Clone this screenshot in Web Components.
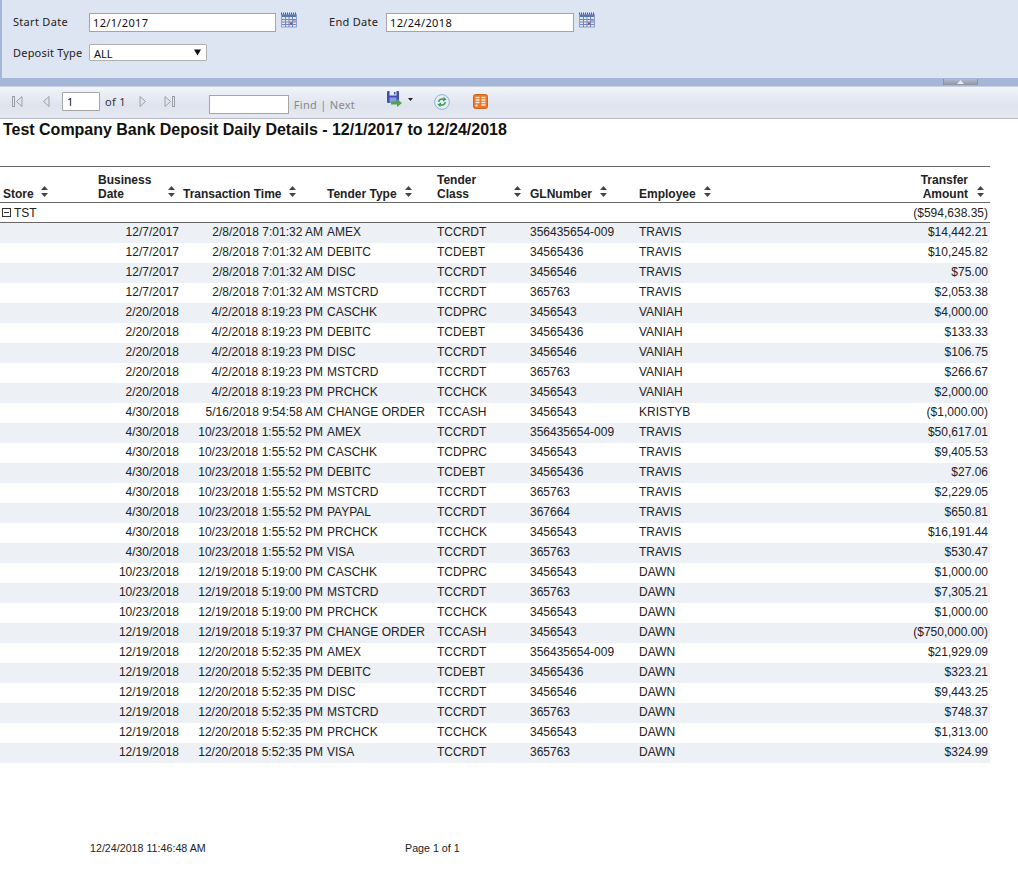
<!DOCTYPE html>
<html><head><meta charset="utf-8"><title>Bank Deposit Daily Details</title>
<style>html,body{margin:0;padding:0;background:#fff;font-family:"Liberation Sans",Arial,sans-serif;overflow:hidden}</style></head>
<body>
<report-viewer></report-viewer>
<script>
const CAL=`<svg width="16" height="16" viewBox="0 0 16 16" style="display:block"><rect x=".5" y="2.500" width="15" height="12.500" fill="#dfe6f5" stroke="#8ba0c8"/><path d="M0 1.500h16" stroke="#555" stroke-dasharray="1 1" stroke-width="2"/><rect x="1" y="3" width="14" height="2" fill="#5a76b0"/><path d="M1 7.500h14M1 10h14M1 12.500h14M4.500 5v10M8 5v10M11.500 5v10" stroke="#6f88bd"/><rect x="9" y="10.500" width="2" height="2" fill="#c23c3c"/><rect x="12" y="8" width="3" height="2" fill="#c9a0b0"/></svg>`;
class FilterField extends HTMLElement{
  constructor(){super();const w=this.getAttribute('width')||'186';
  this.attachShadow({mode:'open'}).innerHTML=`<style>
  :host{display:flex;align-items:flex-start}
  .l{font:11px/14px "Noto Sans",sans-serif;letter-spacing:.3px;color:#222;width:var(--lw,76px);padding-top:2px;white-space:nowrap}
  .v{box-sizing:border-box;width:${w}px;height:19px;border:1px solid #a5a5a5;background:#fff;font:11px/18px "Noto Sans",sans-serif;color:#111;padding-left:3px;letter-spacing:.35px}
  .i{margin:-1px 0 0 5px}
  </style><span class="l"><slot></slot></span><span class="v">${this.getAttribute('value')}</span><span class="i">${CAL}</span>`;}
}
customElements.define('filter-field',FilterField);
class FilterSelect extends HTMLElement{
  constructor(){super();this.attachShadow({mode:'open'}).innerHTML=`<style>
  :host{display:flex;align-items:center}
  .l{font:11px/14px "Noto Sans",sans-serif;letter-spacing:.2px;color:#222;width:76px;white-space:nowrap}
  .s{box-sizing:border-box;width:118px;height:17px;border:1px solid #b0b0b0;border-radius:1px;background:#fff;font:11px/15px "Noto Sans",sans-serif;color:#111;padding:1px 0 0 4px;display:flex;justify-content:space-between;align-items:center}
  svg{margin:-1px 5px 0 0}
  </style><span class="l"><slot></slot></span><span class="s">${this.getAttribute('value')}<svg width="7" height="7" viewBox="0 0 7 7"><path d="M0 .5h7L3.500 6.500z" fill="#111"/></svg></span>`;}
}
customElements.define('filter-select',FilterSelect);
class FilterPanel extends HTMLElement{
  constructor(){super();this.attachShadow({mode:'open'}).innerHTML=`<style>
  :host{display:block;box-sizing:border-box;height:78px;background:#dee5f2;border-left:2px solid #a5b7d9;padding:13px 0 0 11px}
  .r{display:flex}.r2{margin-top:12px}.g{margin-left:32px;--lw:57px}
  </style><div class="r"><filter-field value="12/1/2017" width="187">Start Date</filter-field><filter-field class="g" value="12/24/2018" width="188">End Date</filter-field></div>
  <div class="r r2"><filter-select value="ALL">Deposit Type</filter-select></div>`;}
}
customElements.define('filter-panel',FilterPanel);
class SplitBar extends HTMLElement{
  constructor(){super();this.attachShadow({mode:'open'}).innerHTML=`<style>
  :host{display:flex;justify-content:flex-end;height:8px;background:#a5b7d9;padding-right:40px}
  .h{box-sizing:border-box;width:35px;height:6px;margin-top:1px;background:linear-gradient(#b4bdd0,#8d96a8);border-left:1px solid #8a90a0;border-right:1px solid #8a90a0;display:flex;justify-content:center;padding-top:1px}
  </style><div class="h"><svg width="7" height="4" viewBox="0 0 7 4" style="display:block"><path d="M0 4L3.500 0 7 4z" fill="#e6eaf2"/></svg></div>`;}
}
customElements.define('split-bar',SplitBar);
const nav=(d)=>`<svg width="12" height="14" viewBox="0 0 12 14" style="display:block">${d}</svg>`;
const tri='fill="#e3e6ec" stroke="#9a9fa8"';
const ICONS={
 first:nav(`<rect x="1.500" y="2.500" width="2" height="10" ${tri}/><path d="M11 2.500v10L5.500 7.500z" ${tri}/>`),
 prev:nav(`<path d="M9 2.500v10L3.500 7.500z" ${tri}/>`),
 next:nav(`<path d="M3 2.500v10L8.500 7.500z" ${tri}/>`),
 last:nav(`<path d="M1 2.500v10L6.500 7.500z" ${tri}/><rect x="8.500" y="2.500" width="2" height="10" ${tri}/>`),
 save:`<svg width="16" height="16" viewBox="0 0 16 16" style="display:block"><rect x="0" y="0" width="12" height="12" rx="1" fill="#3f4fb0"/><rect x="2.500" y="0" width="7" height="4.500" fill="#e8ecf8"/><rect x="7" y="1" width="1.500" height="2.500" fill="#3f4fb0"/><rect x="2.500" y="6.500" width="7" height="5.500" fill="#8a9bdc"/><path d="M4 10.500h6V8l5 4-5 4v-2.500H4z" fill="#4fa64a"/></svg>`,
 refresh:`<svg width="16" height="16" viewBox="0 0 16 16" style="display:block"><circle cx="8" cy="8" r="7.400" fill="#e4edf8" stroke="#8fb0d8"/><path d="M4 8a4 4 0 0 1 5.500-3.500V2.800L12.500 5.500 9 7.500V6a2.500 2.500 0 0 0-3.500 2z" fill="#3f9a4a"/><path d="M12 8a4 4 0 0 1-5.500 3.500v1.700L3.500 10.500 7 8.500V10a2.500 2.500 0 0 0 3.500-2z" fill="#3f9a4a"/></svg>`,
 book:`<svg width="15" height="15" viewBox="0 0 15 15" style="display:block"><rect x=".5" y=".5" width="14" height="14" rx="2" fill="#e8792c" stroke="#d0661f"/><path d="M2.500 3.500h4M2.500 6h4M2.500 8.500h4M8.500 3.500h4M8.500 6h4M8.500 8.500h4M8.500 11h4" stroke="#fdeedd" stroke-width="1.300"/><rect x="2.500" y="10.500" width="2" height="2" fill="#fdeedd"/></svg>`
};
class ReportToolbar extends HTMLElement{
  constructor(){super();this.attachShadow({mode:'open'}).innerHTML=`<style>
  :host{display:flex;align-items:center;box-sizing:border-box;height:33px;background:linear-gradient(#f4f6fb 0,#eef1f7 10%,#dfe3ee 60%,#e6e9f1 100%);border-top:1px solid #c8d0e0;border-bottom:1px solid #b5b8c9;font:11px "Noto Sans",sans-serif;letter-spacing:.3px;color:#333;padding:0 0 3px 0}
  .i{flex:none;display:block}
  .pg{box-sizing:border-box;width:38px;height:19px;border:1px solid #a5a5a5;background:#fff;font:11px/17px "Noto Sans",sans-serif;color:#111;padding-left:4px;border-radius:1px}
  .fd{box-sizing:border-box;width:80px;height:19px;border:1px solid #a5a5a5;background:#fff;margin-top:6px}
  .f{color:#8a8a8a;font-size:11px;margin-top:6px;white-space:pre}
  </style>
  <span class="i" style="margin-left:11px">${ICONS.first}</span>
  <span class="i" style="margin-left:17px">${ICONS.prev}</span>
  <span class="pg" style="margin-left:10px">1</span>
  <span style="margin-left:5px">of 1</span>
  <span class="i" style="margin-left:11px">${ICONS.next}</span>
  <span class="i" style="margin-left:15px">${ICONS.last}</span>
  <span class="fd" style="margin-left:33px"></span>
  <span class="f" style="margin-left:5px">Find | Next</span>
  <span class="i" style="margin-left:32px;margin-top:-5px">${ICONS.save}</span>
  <svg class="i" style="margin:-3px 0 0 5px" width="5" height="3" viewBox="0 0 5 3"><path d="M0 0h5L2.500 3z" fill="#222"/></svg>
  <span class="i" style="margin-left:21px;margin-top:1px">${ICONS.refresh}</span>
  <span class="i" style="margin-left:23px;margin-top:1px">${ICONS.book}</span>`;}
}
customElements.define('report-toolbar',ReportToolbar);
class SortIcon extends HTMLElement{
  constructor(){super();this.attachShadow({mode:'open'}).innerHTML=`<style>:host{display:inline-block;flex:none;width:7px;height:11px;margin-bottom:4px}svg{display:block}</style><svg width="7" height="11" viewBox="0 0 7 11"><path d="M3.500 0L7 4H0zM0 7h7L3.500 11z" fill="#444"/></svg>`;}
}
customElements.define('sort-icon',SortIcon);
const COLS='95px 85px 147px 110px 93px 109px 261px 90px';
class HeadCell extends HTMLElement{
  constructor(){super();const gap=this.getAttribute('gap')||'8',r=this.hasAttribute('right'),pl=this.getAttribute('pl')||'3',pr=this.getAttribute('pr')||'0';
  this.attachShadow({mode:'open'}).innerHTML=`<style>
  :host{display:flex;align-items:flex-end;font:bold 12px/14px "Liberation Sans",Arial,sans-serif;color:#222;padding:0 ${pr}px 1px ${pl}px;min-width:0;${r?'justify-content:flex-end;text-align:right;':''}}
  .t{flex:${this.hasAttribute('grow')?'1':'none'}}
  sort-icon{margin-left:${gap}px}
  </style><span class="t"><slot></slot></span><sort-icon></sort-icon>`;}
}
customElements.define('head-cell',HeadCell);
class HeadRow extends HTMLElement{
  constructor(){super();this.attachShadow({mode:'open'}).innerHTML=`<style>
  :host{display:grid;grid-template-columns:${COLS};box-sizing:border-box;height:37px;border-top:1px solid #666;border-bottom:1px solid #666}
  </style><slot></slot>`;}
}
customElements.define('head-row',HeadRow);
class GroupRow extends HTMLElement{
  constructor(){super();this.attachShadow({mode:'open'}).innerHTML=`<style>
  :host{display:flex;align-items:center;justify-content:space-between;box-sizing:border-box;height:20px;border-bottom:1px solid #666;font:12px "Liberation Sans",Arial,sans-serif;color:#222;padding:0 2px 0 2px}
  .l{display:flex;align-items:center;gap:3px}
  </style><span class="l"><svg width="9" height="9" viewBox="0 0 9 9" style="display:block"><rect x=".5" y=".5" width="8" height="8" fill="#fff" stroke="#333"/><path d="M2 4.500h5" stroke="#333"/></svg>${this.getAttribute('name')}</span><span>${this.getAttribute('total')}</span>`;}
}
customElements.define('group-row',GroupRow);
class DataRow extends HTMLElement{
  constructor(){super();const c=JSON.parse(this.getAttribute('cells'));
  this.attachShadow({mode:'open'}).innerHTML=`<style>
  :host{display:grid;grid-template-columns:${COLS};height:20px;font:12px/19px "Liberation Sans",Arial,sans-serif;color:#222;white-space:nowrap}
  :host(.alt){background:#edf0f5}
  .r{text-align:right}
  .d{padding-right:1px}.t{padding-right:4px}.a{padding-right:2px}
  </style><span></span><span class="r d">${c[0]}</span><span class="r t">${c[1]}</span><span>${c[2]}</span><span>${c[3]}</span><span>${c[4]}</span><span>${c[5]}</span><span class="r a">${c[6]}</span>`;}
}
customElements.define('data-row',DataRow);
const A=['12/7/2017','2/8/2018 7:01:32 AM'],B=['2/20/2018','4/2/2018 8:19:23 PM'],C=['4/30/2018','10/23/2018 1:55:52 PM'],D=['10/23/2018','12/19/2018 5:19:00 PM'],E=['12/19/2018','12/20/2018 5:52:35 PM'];
const AM=['AMEX','TCCRDT','356435654-009'],DB=['DEBITC','TCDEBT','34565436'],DI=['DISC','TCCRDT','3456546'],MS=['MSTCRD','TCCRDT','365763'],CA=['CASCHK','TCDPRC','3456543'],PR=['PRCHCK','TCCHCK','3456543'],VI=['VISA','TCCRDT','365763'],PP=['PAYPAL','TCCRDT','367664'],CO=['CHANGE ORDER','TCCASH','3456543'];
const ROWS=[
[A,AM,'TRAVIS','$14,442.21'],[A,DB,'TRAVIS','$10,245.82'],[A,DI,'TRAVIS','$75.00'],[A,MS,'TRAVIS','$2,053.38'],
[B,CA,'VANIAH','$4,000.00'],[B,DB,'VANIAH','$133.33'],[B,DI,'VANIAH','$106.75'],[B,MS,'VANIAH','$266.67'],[B,PR,'VANIAH','$2,000.00'],
[['4/30/2018','5/16/2018 9:54:58 AM'],CO,'KRISTYB','($1,000.00)'],
[C,AM,'TRAVIS','$50,617.01'],[C,CA,'TRAVIS','$9,405.53'],[C,DB,'TRAVIS','$27.06'],[C,MS,'TRAVIS','$2,229.05'],[C,PP,'TRAVIS','$650.81'],[C,PR,'TRAVIS','$16,191.44'],[C,VI,'TRAVIS','$530.47'],
[D,CA,'DAWN','$1,000.00'],[D,MS,'DAWN','$7,305.21'],[D,PR,'DAWN','$1,000.00'],
[['12/19/2018','12/19/2018 5:19:37 PM'],CO,'DAWN','($750,000.00)'],
[E,AM,'DAWN','$21,929.09'],[E,DB,'DAWN','$323.21'],[E,DI,'DAWN','$9,443.25'],[E,MS,'DAWN','$748.37'],[E,PR,'DAWN','$1,313.00'],[E,VI,'DAWN','$324.99']];
class ReportTable extends HTMLElement{
  constructor(){super();const s=this.attachShadow({mode:'open'});
  const esc=o=>JSON.stringify(o).replace(/'/g,'&#39;');
  s.innerHTML=`<style>:host{display:block;width:990px;margin-top:27px}</style>
  <head-row>
   <head-cell gap="7">Store</head-cell>
   <head-cell grow pr="5">Business<br>Date</head-cell>
   <head-cell>Transaction Time</head-cell>
   <head-cell pl="0">Tender Type</head-cell>
   <head-cell pl="0" grow pr="9">Tender<br>Class</head-cell>
   <head-cell pl="0">GLNumber</head-cell>
   <head-cell pl="0">Employee</head-cell>
   <head-cell right pr="6" gap="9"><span>Transfer<br>Amount</span></head-cell>
  </head-row>
  <group-row name="TST" total="($594,638.35)"></group-row>
  ${ROWS.map((r,i)=>`<data-row class="${i%2?'':'alt'}" cells='${esc([r[0][0],r[0][1],r[1][0],r[1][1],r[1][2],r[2],r[3]])}'></data-row>`).join('')}`;}
}
customElements.define('report-table',ReportTable);
class ReportFooter extends HTMLElement{
  constructor(){super();this.attachShadow({mode:'open'}).innerHTML=`<style>
  :host{display:flex;margin-top:79px;padding-left:90px;font:10.700px/13px "Liberation Sans",Arial,sans-serif;color:#222}
  .a{width:315px}
  </style><span class="a">12/24/2018 11:46:48 AM</span><span>Page 1 of 1</span>`;}
}
customElements.define('report-footer',ReportFooter);
class ReportViewer extends HTMLElement{
  constructor(){super();this.attachShadow({mode:'open'}).innerHTML=`<style>
  :host{display:block}
  h1{margin:2px 0 0 3px;font:bold 16px/18px "Liberation Sans",Arial,sans-serif;letter-spacing:-.015px;color:#111}
  </style><filter-panel></filter-panel><split-bar></split-bar><report-toolbar></report-toolbar>
  <h1>Test Company Bank Deposit Daily Details - 12/1/2017 to 12/24/2018</h1>
  <report-table></report-table><report-footer></report-footer>`;}
}
customElements.define('report-viewer',ReportViewer);
</script>
</body></html>
